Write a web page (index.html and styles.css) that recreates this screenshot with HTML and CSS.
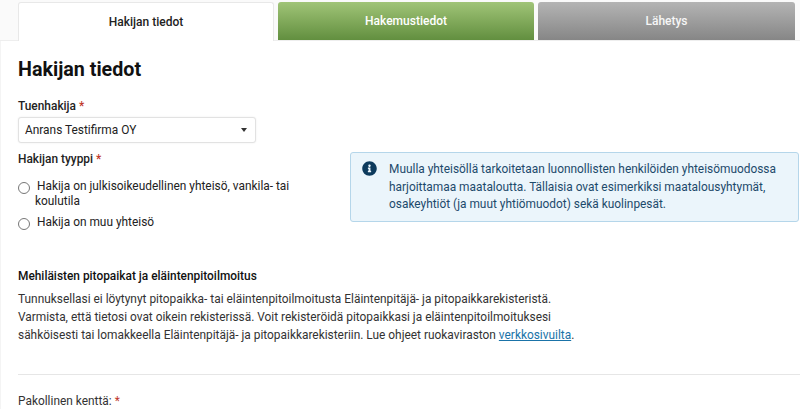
FILE: index.html
```html
<!DOCTYPE html>
<html lang="fi">
  <head>
    <meta charset="UTF-8" />
    <title>Hakijan tiedot</title>
    <link rel="stylesheet" href="styles.css">
  </head>
  <body>
    <!-- Tabs -->
    <div class="tabs">
      <div class="tab active">Hakijan tiedot</div>
      <div class="tab green">Hakemustiedot</div>
      <div class="tab grey">Lähetys</div>
    </div>

    <div class="content">
      <h1>Hakijan tiedot</h1>

      <div class="label">Tuenhakija <span class="req">*</span></div>
      <div class="select">
        <span>Anrans Testifirma OY</span>
        <span class="caret"></span>
      </div>

      <div class="type-row">
        <div class="type-col">
          <div class="label">Hakijan tyyppi <span class="req">*</span></div>
          <div class="radio-row">
            <span class="radio"></span>
            <span class="radio-text">Hakija on julkisoikeudellinen yhteisö, vankila- tai koulutila</span>
          </div>
          <div class="radio-row">
            <span class="radio"></span>
            <span class="radio-text">Hakija on muu yhteisö</span>
          </div>
        </div>

        <div class="info">
          <svg class="info-icon" viewBox="0 0 512 512" width="15" height="15">
            <path fill="#0d3a5c" d="M256 8C119 8 8 119 8 256s111 248 248 248 248-111 248-248S393 8 256 8zm0 110c23.200 0 42 18.800 42 42s-18.800 42-42 42-42-18.800-42-42 18.800-42 42-42zm56 254c0 6.600-5.400 12-12 12h-88c-6.600 0-12-5.400-12-12v-24c0-6.600 5.400-12 12-12h12v-64h-12c-6.600 0-12-5.400-12-12v-24c0-6.600 5.400-12 12-12h64c6.600 0 12 5.400 12 12v100h12c6.600 0 12 5.400 12 12v24z"/>
          </svg>
          <p>Muulla yhteisöllä tarkoitetaan luonnollisten henkilöiden yhteisömuodossa harjoittamaa maataloutta. Tällaisia ovat esimerkiksi maatalousyhtymät, osakeyhtiöt (ja muut yhtiömuodot) sekä kuolinpesät.</p>
        </div>
      </div>

      <h2>Mehiläisten pitopaikat ja eläintenpitoilmoitus</h2>
      <p class="body-text">Tunnuksellasi ei löytynyt pitopaikka- tai eläintenpitoilmoitusta Eläintenpitäjä- ja pitopaikkarekisteristä.<br>Varmista, että tietosi ovat oikein rekisterissä. Voit rekisteröidä pitopaikkasi ja eläintenpitoilmoituksesi<br>sähköisesti tai lomakkeella Eläintenpitäjä- ja pitopaikkarekisteriin. Lue ohjeet ruokaviraston <a href="#">verkkosivuilta</a>.</p>

      <hr>

      <div class="required-note">Pakollinen kenttä: <span class="req">*</span></div>
    </div>
  </body>
</html>
```

FILE: styles.css
```css
html,
body {
  height: 100%;
}

body {
  font-family: Roboto, "Liberation Sans", sans-serif;
  font-size: 11.900px;
  color: #222;
  background-color: #fff;
  margin: 0;
  padding: 0;
  overflow: hidden;
}

/* Tabs */
.tabs {
  display: flex;
  gap: 4px;
  height: 41px;
  padding: 2px 0 0 18px;
  box-sizing: border-box;
  background-color: #fafafa;
  border-bottom: 1px solid #eee;
}

.tab {
  width: 256px;
  height: 38px;
  display: flex;
  align-items: center;
  justify-content: center;
  font-size: 12px;
  font-weight: 500;
  border-radius: 3px 3px 0 0;
  color: white;
}

.tab.active {
  height: 39px;
  background-color: white;
  color: #222;
  border: 1px solid #e8e8e8;
  border-bottom: none;
  box-sizing: border-box;
  position: relative;
  z-index: 1;
}

.tab.green {
  background: linear-gradient(#a0c477, #628f3f);
}

.tab.grey {
  width: 257px;
  background: linear-gradient(#b4b4b4, #868686);
  color: #f6f6f6;
}

.content {
  padding: 16px 0 0 18px;
  box-shadow: inset 1px 0 0 #f4f4f4;
}

h1 {
  font-size: 19.700px;
  font-weight: 700;
  line-height: 26px;
  color: #111;
  margin: 0 0 15px 0;
}

.label {
  font-weight: 500;
  line-height: 16px;
  color: #222;
}

.req {
  color: #c0392b;
}

.select {
  width: 238px;
  height: 26px;
  box-sizing: border-box;
  margin-top: 3px;
  padding: 0 8px 0 6px;
  display: flex;
  align-items: center;
  justify-content: space-between;
  background-color: white;
  border: 1px solid #e2e2e2;
  border-radius: 3px;
  box-shadow: 0px 0px 2px rgba(0, 0, 0, 0.08);
}

.caret {
  width: 0;
  height: 0;
  border-left: 3.500px solid transparent;
  border-right: 3.500px solid transparent;
  border-top: 4px solid #333;
}

.type-row {
  display: flex;
  margin-top: 8px;
}

.type-col {
  width: 332px;
  flex-shrink: 0;
}

.radio-row {
  display: flex;
  margin-top: 12px;
  width: 275px;
}

.radio-row + .radio-row {
  margin-top: 6px;
}

.radio {
  width: 12px;
  height: 12px;
  flex-shrink: 0;
  box-sizing: border-box;
  border: 1.500px solid #777;
  border-radius: 50%;
  background-color: white;
  margin-top: 3px;
}

.radio-text {
  line-height: 15px;
  margin-left: 5px;
  text-indent: 2px;
}

.info {
  width: 449px;
  height: 70px;
  box-sizing: border-box;
  margin-top: 1px;
  padding: 8px 10px 0 11px;
  display: flex;
  gap: 12px;
  background-color: #ebf5fb;
  border: 1px solid #b5d6ea;
  border-radius: 3px;
}

.info-icon {
  flex-shrink: 0;
}

.info p {
  margin: 0;
  line-height: 17.500px;
  color: #1d4a6b;
}

h2 {
  font-size: 11.900px;
  font-weight: 500;
  line-height: 16px;
  color: #111;
  margin: 38px 0 0 0;
}

.body-text {
  margin: 6px 0 0 0;
  line-height: 18px;
  color: #333;
}

.body-text a {
  color: #1a73a8;
}

hr {
  border: none;
  border-top: 1px solid #e6e6e6;
  margin: 30px 0 0 0;
}

.required-note {
  margin-top: 18px;
  line-height: 16px;
  color: #333;
}
```
